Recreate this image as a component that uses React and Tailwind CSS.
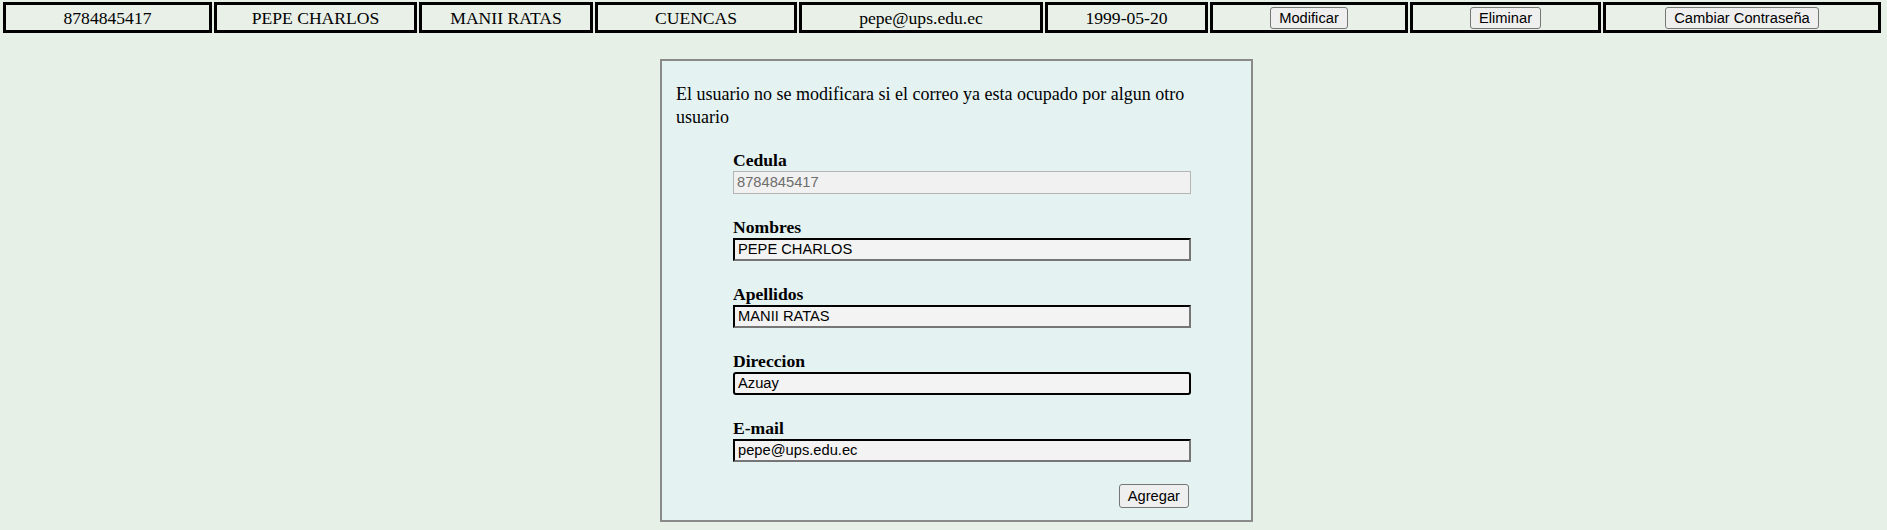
import React from 'react';

const ROW = [
  { w: 'w-[209px]', text: '8784845417' },
  { w: 'w-[203px]', text: 'PEPE CHARLOS' },
  { w: 'w-[174px]', text: 'MANII RATAS' },
  { w: 'w-[202px]', text: 'CUENCAS' },
  { w: 'w-[244px]', text: 'pepe@ups.edu.ec' },
  { w: 'w-[163px]', text: '1999-05-20' },
  { w: 'w-[198px]', button: 'Modificar' },
  { w: 'w-[191px]', button: 'Eliminar' },
  { w: 'w-[278px]', button: 'Cambiar Contraseña' },
];

const btn =
  "font-['Liberation_Sans',Arial,sans-serif] text-[14.7px] leading-[18px] text-black bg-[#efefef] border border-[#767676] rounded-[3px] px-2 py-[1px] h-[22px]";

function Field({ label, value, variant }) {
  let input =
    'border-2 border-t-black border-l-black border-b-[#767676] border-r-[#767676] bg-[#f3f3f3] text-black';
  if (variant === 'disabled')
    input = 'border border-[#b4b4b4] bg-[#f1f1f1] text-[#6d6d6d]';
  if (variant === 'focus') input = 'border-2 border-black rounded-[3px] bg-[#f3f3f3] text-black';

  return (
    <div className="flex flex-col">
      <span className="font-bold text-[17.6px] leading-[21px] text-black">{label}</span>
      <div
        className={`w-[458px] h-[23px] flex items-center pl-[3px] font-['Liberation_Sans',Arial,sans-serif] text-[14.7px] leading-none ${input}`}
      >
        {value}
      </div>
    </div>
  );
}

export default function App() {
  return (
    <div className="min-h-[530px] w-full bg-[#e7f0e7] font-['Liberation_Serif','Times_New_Roman',serif] text-black">
      <div className="flex gap-[2px] pl-[3px] pt-[2px]">
        {ROW.map((c, i) => (
          <div
            key={i}
            className={`${c.w} h-[31px] shrink-0 border-[3px] border-black bg-[#e8f0e8] flex items-center justify-center text-[17.6px] leading-[20px]`}
          >
            {c.text ? c.text : <button type="button" className={btn}>{c.button}</button>}
          </div>
        ))}
      </div>

      <div className="flex justify-center pl-[26px] pt-[26px]">
        <div className="w-[593px] border-2 border-[#8a8a8a] bg-[#e4f2f2] px-[14px] pt-[22px] pb-[12px]">
          <p className="max-w-[530px] text-[18px] leading-[23px]">
            El usuario no se modificara si el correo ya esta ocupado por algun otro usuario
          </p>
          <div className="pl-[57px] pt-[21px] flex flex-col gap-[23px]">
            <Field label="Cedula" value="8784845417" variant="disabled" />
            <Field label="Nombres" value="PEPE CHARLOS" />
            <Field label="Apellidos" value="MANII RATAS" />
            <Field label="Direccion" value="Azuay" variant="focus" />
            <Field label="E-mail" value="pepe@ups.edu.ec" />
          </div>
          <div className="w-[515px] flex justify-end pt-[22px]">
            <button type="button" className={`${btn} h-[24px] mr-[2px]`}>Agregar</button>
          </div>
        </div>
      </div>
    </div>
  );
}
